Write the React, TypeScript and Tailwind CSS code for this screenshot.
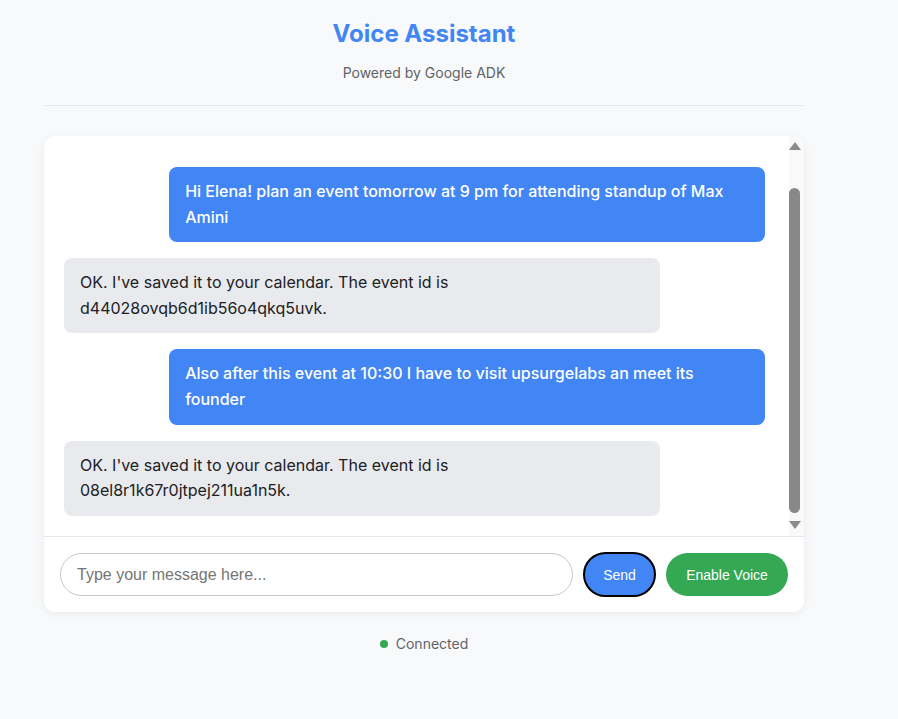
import { useEffect, useRef } from "react";

type Message = { id: number; role: "user" | "assistant"; text: string };

const messages: Message[] = [
  { id: 1, role: "user", text: "Hi Elena! plan an event tomorrow at 9 pm for attending standup of Max Amini" },
  { id: 2, role: "assistant", text: "OK. I've saved it to your calendar. The event id is d44028ovqb6d1ib56o4qkq5uvk." },
  { id: 3, role: "user", text: "Also after this event at 10:30 I have to visit upsurgelabs an meet its founder" },
  { id: 4, role: "assistant", text: "OK. I've saved it to your calendar. The event id is 08el8r1k67r0jtpej211ua1n5k." },
];

function ScrollArrow({ down = false }: { down?: boolean }) {
  return (
    <svg className={`h-[8px] w-[12px] shrink-0 ${down ? "mt-[8px]" : "mt-[6px]"}`} viewBox="0 0 12 8" fill="#8a8a8a">
      <path d={down ? "M0 0h12L6 8z" : "M6 0l6 8H0z"} />
    </svg>
  );
}

export default function App() {
  const listRef = useRef<HTMLDivElement>(null);

  // keep the chat pinned to the latest message
  useEffect(() => {
    if (listRef.current) listRef.current.scrollTop = listRef.current.scrollHeight;
  }, []);

  return (
    <div className="min-h-screen bg-[#f8f9fa] font-['Inter','Noto_Sans',sans-serif] text-[#202124]">
      <div className="ml-[44px] w-[760px]">
        {/* Header */}
        <header className="border-b border-[#e5e7eb] pt-5 pb-[22px] text-center">
          <h1 className="text-2xl leading-[28px] font-bold text-[#4285f4]">Voice Assistant</h1>
          <p className="mt-[15px] text-sm leading-5 text-[#5f6368]">Powered by Google ADK</p>
        </header>

        {/* Chat card */}
        <div className="mt-[30px] overflow-hidden rounded-[10px] bg-white shadow-[0_2px_10px_rgba(0,0,0,0.06)]">
          <div className="flex h-[400px]">
            <div ref={listRef} className="flex-1 overflow-hidden pt-[75px] pr-6 pb-5 pl-5">
              <div className="flex flex-col gap-4">
                {messages.map((m) => (
                  <div key={m.id} className={`flex ${m.role === "user" ? "justify-end" : "justify-start"}`}>
                    <div
                      className={`max-w-[85%] rounded-lg px-4 py-3 text-base leading-[1.6] ${
                        m.role === "user" ? "bg-[#4285f4] font-medium text-white" : "bg-[#e8eaed] text-[#202124]"
                      }`}
                    >
                      {m.text}
                    </div>
                  </div>
                ))}
              </div>
            </div>

            {/* scrollbar */}
            <div className="flex w-[15px] flex-col items-start bg-[#f9f9f9]">
              <ScrollArrow />
              <div className="mt-[38px] h-[325px] w-[11px] shrink-0 rounded-full bg-[#888]" />
              <ScrollArrow down />
            </div>
          </div>

          {/* Input row */}
          <div className="flex items-center gap-[10px] border-t border-[#e5e7eb] p-4 font-['Liberation_Sans',Arial,sans-serif]">
            <input
              type="text"
              placeholder="Type your message here..."
              className="h-[43px] flex-1 rounded-full border border-[#c4c7cc] px-4 text-base text-[#202124] outline-none placeholder:text-[#757575]"
            />
            <button className="-my-px h-[45px] w-[73px] rounded-full border-2 border-black bg-[#4285f4] text-sm text-white">
              Send
            </button>
            <button className="h-[43px] w-[122px] rounded-full bg-[#34a853] text-sm text-white">
              Enable Voice
            </button>
          </div>
        </div>

        {/* Status */}
        <div className="mt-[22px] flex items-center justify-center gap-2 text-sm leading-5 text-[#5f6368]">
          <span className="h-2 w-2 rounded-full bg-[#34a853]" />
          <span>Connected</span>
        </div>
      </div>
    </div>
  );
}
